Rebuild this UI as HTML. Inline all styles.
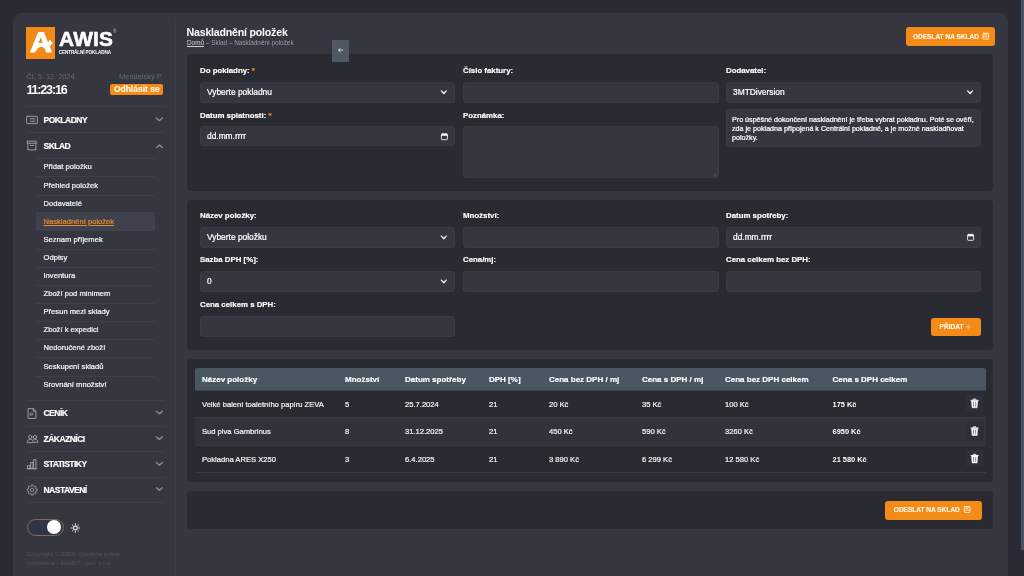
<!DOCTYPE html>
<html lang="cs">
<head>
<meta charset="utf-8">
<title>Naskladnění položek</title>
<style>
*{box-sizing:border-box;margin:0;padding:0}
html,body{width:1024px;height:576px;overflow:hidden}
body{background:#2a2a34;font-family:"Liberation Sans",sans-serif;color:#fff;position:relative;-webkit-font-smoothing:antialiased}
.abs,.t,.lbl,.inp,.card,.btn,.hr,.sub,.mi,.chev,.ico{position:absolute}
.t{white-space:nowrap;line-height:12px;height:12px}
#root{position:absolute;left:0;top:0;width:1024px;height:576px;will-change:transform}
#panel{position:absolute;left:13px;top:13px;width:995px;height:580px;background:#363640;border-radius:8px}
#sideline{position:absolute;left:169px;top:21px;width:7px;height:555px;background:#35353f;border-right:1px solid #3a3b45}
#scroll{position:absolute;left:1021px;top:0;width:3px;height:550px;background:#4b5462}
.card{background:#292a32;border-radius:4px}
.lbl{font-weight:bold;font-size:7.85px;line-height:12px;height:12px;white-space:nowrap;color:#fff}
.lbl i{color:#f08a1c;font-style:normal}
.inp{background:#35363f;border:1px solid #3a3b45;border-radius:3px;height:20px;font-size:8.4px;line-height:18px;padding:0 0 0 6px;color:#fff;white-space:nowrap}
.btn{background:#f28b17;border-radius:3px;color:#fff3e0;font-weight:bold;font-size:6.54px;white-space:nowrap;text-align:left}
.hr{height:1px;background:#3e3f49}
.mi{font-weight:bold;font-size:8.5px;letter-spacing:-0.52px;line-height:12px;height:12px;left:43.5px;color:#fff;white-space:nowrap}
.sub{font-size:7.62px;line-height:12px;height:12px;left:43.5px;color:#f4f4f6;white-space:nowrap}
.th{position:absolute;font-weight:bold;font-size:8px;line-height:12px;height:12px;top:373.8px;white-space:nowrap}
.td{position:absolute;font-size:7.6px;line-height:12px;height:12px;white-space:nowrap;color:#f2f2f4}
.td b{font-weight:bold;color:#fff;font-size:7.4px;-webkit-text-stroke:0}
.inp,.sub,.td{-webkit-text-stroke:0.22px currentColor}
.lbl,.th,.mi,.btn{-webkit-text-stroke:0.18px currentColor}
svg{position:absolute;overflow:visible}
</style>
</head>
<body>
<div id="root">
<div id="panel"></div>
<div id="sideline"></div>
<div id="scroll"></div>

<!-- SIDEBAR -->
<div id="sidebar">
  <div class="abs" style="left:26.4px;top:26.7px;width:28.9px;height:32px;background:#f18a16"></div>
  <div class="t" style="left:58.6px;top:26.4px;font-weight:bold;font-size:19.8px;line-height:26px;height:26px;letter-spacing:0.2px;-webkit-text-stroke:0.55px #fff;transform:scaleX(1.055);transform-origin:0 0">AWIS</div>
  <div class="t" style="left:113px;top:29.2px;font-size:4.6px;line-height:5px;height:5px;color:#c4c5cb">®</div>
  <div class="t" style="left:58.8px;top:49.6px;font-weight:bold;font-size:4.6px;line-height:6px;height:6px;letter-spacing:-0.1px">CENTRÁLNÍ POKLADNA</div>

  <div class="t" style="left:26.6px;top:70.5px;font-size:7.3px;color:#666975">Čt, 5. 12. 2024</div>
  <div class="t" style="left:100px;width:62.8px;text-align:right;top:70.5px;font-size:7.45px;color:#666975">Mendelský P.</div>
  <div class="t" style="left:26.4px;top:81.6px;font-weight:bold;font-size:12.5px;letter-spacing:-1.15px;line-height:16px;height:16px">11:23:16</div>
  <div class="btn" style="left:110.3px;top:84px;width:53px;height:11.4px;border-radius:2px;font-size:8.5px;line-height:11.4px;text-align:center">Odhlásit se</div>

  <div class="hr" style="left:26.5px;top:106px;width:138px"></div>
  <div class="mi" style="top:113.9px">POKLADNY</div>
  <div class="hr" style="left:26.5px;top:132px;width:138px"></div>
  <div class="mi" style="top:139.5px">SKLAD</div>
  <div class="hr" style="left:36px;top:157.5px;width:118.5px"></div>

  <div class="abs" style="left:36px;top:212px;width:119px;height:19px;background:#3f424d"></div>
  <div class="sub" style="top:161.4px">Přidat položku</div>
  <div class="hr" style="left:36px;top:176px;width:119px"></div>
  <div class="sub" style="top:179.5px">Přehled položek</div>
  <div class="hr" style="left:36px;top:195px;width:119px"></div>
  <div class="sub" style="top:197.6px">Dodavatelé</div>
  <div class="sub" style="top:215.7px;color:#e8882a;text-decoration:underline">Naskladnění položek</div>
  <div class="sub" style="top:233.8px">Seznam příjemek</div>
  <div class="hr" style="left:36px;top:249px;width:119px"></div>
  <div class="sub" style="top:251.9px">Odpisy</div>
  <div class="hr" style="left:36px;top:267px;width:119px"></div>
  <div class="sub" style="top:270.0px">Inventura</div>
  <div class="hr" style="left:36px;top:285px;width:119px"></div>
  <div class="sub" style="top:288.1px">Zboží pod minimem</div>
  <div class="hr" style="left:36px;top:303px;width:119px"></div>
  <div class="sub" style="top:306.2px">Přesun mezi sklady</div>
  <div class="hr" style="left:36px;top:321px;width:119px"></div>
  <div class="sub" style="top:324.3px">Zboží k expedici</div>
  <div class="hr" style="left:36px;top:339px;width:119px"></div>
  <div class="sub" style="top:342.4px">Nedoručené zboží</div>
  <div class="hr" style="left:36px;top:357px;width:119px"></div>
  <div class="sub" style="top:360.5px">Seskupení skladů</div>
  <div class="hr" style="left:36px;top:376px;width:119px"></div>
  <div class="sub" style="top:378.6px">Srovnání množství</div>

  <div class="hr" style="left:26.5px;top:400px;width:138px"></div>
  <div class="mi" style="top:406.9px">CENÍK</div>
  <div class="hr" style="left:26.5px;top:425.5px;width:138px"></div>
  <div class="mi" style="top:432.7px">ZÁKAZNÍCI</div>
  <div class="hr" style="left:26.5px;top:451px;width:138px"></div>
  <div class="mi" style="top:458.4px">STATISTIKY</div>
  <div class="hr" style="left:26.5px;top:476.5px;width:138px"></div>
  <div class="mi" style="top:484.2px">NASTAVENÍ</div>
  <div class="hr" style="left:26.5px;top:502px;width:138px"></div>

  <div class="abs" style="left:27px;top:519px;width:37px;height:17px;border:1px solid #86694f;border-radius:9px"></div>
  <div class="abs" style="left:30px;top:522px;width:26px;height:11px;border-radius:6px;background:#2f3548"></div>
  <div class="abs" style="left:47px;top:520.3px;width:14px;height:14px;border-radius:7px;background:#fff"></div>

  <div class="t" style="left:26.5px;top:548px;font-size:6.2px;color:#50535e">Copyright © 2024, Všechna práva</div>
  <div class="t" style="left:26.5px;top:556.8px;font-size:6.2px;color:#50535e">vyhrazena - EkoBIT, spol. s.r.o.</div>
</div>

<!-- HEADER -->
<div class="t" style="left:186.6px;top:23.7px;font-weight:bold;font-size:10.6px;letter-spacing:-0.2px;line-height:16px;height:16px">Naskladnění položek</div>
<div class="t" style="left:187px;top:36.8px;font-size:6.4px;color:#9c9da6"><u style="color:#cfd0d6">Domů</u> – Sklad – Naskladnění položek</div>
<div class="btn" style="left:905.5px;top:26.5px;width:89.3px;height:19.5px;line-height:19.5px;padding-left:7.4px">ODESLAT NA SKLAD</div>

<!-- CARD 1 -->
<div class="card" style="left:187px;top:54px;width:806px;height:137px"></div>
<div class="lbl" style="left:200px;top:64.5px">Do pokladny: <i>*</i></div>
<div class="inp" style="left:200px;top:82px;width:255px;height:20.5px">Vyberte pokladnu</div>
<div class="lbl" style="left:200px;top:109.5px">Datum splatnosti: <i>*</i></div>
<div class="inp" style="left:200px;top:126px;width:255px">dd.mm.rrrr</div>
<div class="lbl" style="left:463px;top:64.5px">Číslo faktury:</div>
<div class="inp" style="left:462.5px;top:82px;width:256px;height:20.5px"></div>
<div class="lbl" style="left:463px;top:109.5px">Poznámka:</div>
<div class="inp" style="left:462.5px;top:126px;width:256px;height:51.5px"></div>
<div class="lbl" style="left:726px;top:64.5px">Dodavatel:</div>
<div class="inp" style="left:726px;top:82px;width:255px;height:20.5px">3MTDiversion</div>
<div class="inp" style="left:726px;top:109px;width:255px;height:38px;font-size:7.15px;line-height:9.1px;padding:5.9px 0 0 5px;letter-spacing:0;white-space:normal">Pro úspěšné dokončení naskladnění je třeba vybrat pokladnu. Poté se ověří,<br>zda je pokladna připojená k Centrální pokladně, a je možné naskladňovat<br>položky.</div>

<div class="abs" style="left:332px;top:40px;width:17.4px;height:22.2px;background:#4f5966"></div>
<svg style="left:338.1px;top:48.3px" width="4.7" height="4.2" viewBox="0 0 5.6 5"><path d="M5.4 2.5H0.8M2.6 0.6L0.7 2.5L2.6 4.4" fill="none" stroke="#fff" stroke-width="0.9" stroke-linecap="round" stroke-linejoin="round"/></svg>

<!-- CARD 2 -->
<div class="card" style="left:187px;top:200px;width:806px;height:150px"></div>
<div class="lbl" style="left:200px;top:210px">Název položky:</div>
<div class="inp" style="left:200px;top:227.3px;width:255px;height:20.4px">Vyberte položku</div>
<div class="lbl" style="left:200px;top:254.2px">Sazba DPH [%]:</div>
<div class="inp" style="left:200px;top:271.2px;width:255px;height:20.6px">0</div>
<div class="lbl" style="left:200px;top:298.9px">Cena celkem s DPH:</div>
<div class="inp" style="left:200px;top:316px;width:255px;height:20.6px"></div>
<div class="lbl" style="left:463px;top:210px">Množství:</div>
<div class="inp" style="left:462.5px;top:227.3px;width:256px;height:20.4px"></div>
<div class="lbl" style="left:463px;top:254.2px">Cena/mj:</div>
<div class="inp" style="left:462.5px;top:271.2px;width:256px;height:20.6px"></div>
<div class="lbl" style="left:726px;top:210px">Datum spotřeby:</div>
<div class="inp" style="left:726px;top:227.3px;width:255px;height:20.4px">dd.mm.rrrr</div>
<div class="lbl" style="left:726px;top:254.2px">Cena celkem bez DPH:</div>
<div class="inp" style="left:726px;top:271.2px;width:255px;height:20.6px"></div>
<div class="btn" style="left:931px;top:317.5px;width:50.3px;height:18.8px;line-height:18.8px;padding-left:8.6px">PŘIDAT</div>

<!-- CARD 3 -->
<div class="card" style="left:187px;top:359px;width:806px;height:123px"></div>
<div class="abs" style="left:195px;top:368px;width:791px;height:22px;background:#4a5662;border-radius:2px 2px 0 0"></div>
<div class="abs" style="left:195px;top:390px;width:791px;height:1px;background:#3a404b"></div>
<div class="abs" style="left:195px;top:418px;width:791px;height:27px;background:#31323b"></div>
<div class="hr" style="left:195px;top:417px;width:791px;background:#393a44"></div>
<div class="hr" style="left:195px;top:445px;width:791px;background:#393a44"></div>
<div class="hr" style="left:195px;top:472px;width:791px;background:#393a44"></div>

<div class="th" style="left:202px">Název položky</div>
<div class="th" style="left:345px">Množství</div>
<div class="th" style="left:405px">Datum spotřeby</div>
<div class="th" style="left:489px">DPH [%]</div>
<div class="th" style="left:549px">Cena bez DPH / mj</div>
<div class="th" style="left:642px">Cena s DPH / mj</div>
<div class="th" style="left:725px">Cena bez DPH celkem</div>
<div class="th" style="left:832.6px">Cena s DPH celkem</div>

<div class="td" style="left:202px;top:398.5px">Velké balení toaletního papíru ZEVA</div>
<div class="td" style="left:345px;top:398.5px">5</div>
<div class="td" style="left:405px;top:398.5px">25.7.2024</div>
<div class="td" style="left:489px;top:398.5px">21</div>
<div class="td" style="left:549px;top:398.5px">20 Kč</div>
<div class="td" style="left:642px;top:398.5px">35 Kč</div>
<div class="td" style="left:725px;top:398.5px">100 Kč</div>
<div class="td" style="left:832.6px;top:398.5px"><b>175 Kč</b></div>

<div class="td" style="left:202px;top:426px">Sud piva Gambrinus</div>
<div class="td" style="left:345px;top:426px">8</div>
<div class="td" style="left:405px;top:426px">31.12.2025</div>
<div class="td" style="left:489px;top:426px">21</div>
<div class="td" style="left:549px;top:426px">450 Kč</div>
<div class="td" style="left:642px;top:426px">590 Kč</div>
<div class="td" style="left:725px;top:426px">3260 Kč</div>
<div class="td" style="left:832.6px;top:426px"><b>6950 Kč</b></div>

<div class="td" style="left:202px;top:453.5px">Pokladna ARES X250</div>
<div class="td" style="left:345px;top:453.5px">3</div>
<div class="td" style="left:405px;top:453.5px">6.4.2025</div>
<div class="td" style="left:489px;top:453.5px">21</div>
<div class="td" style="left:549px;top:453.5px">3 890 Kč</div>
<div class="td" style="left:642px;top:453.5px">6 299 Kč</div>
<div class="td" style="left:725px;top:453.5px">12 580 Kč</div>
<div class="td" style="left:832.6px;top:453.5px"><b>21 580 Kč</b></div>

<!-- CARD 4 -->
<div class="card" style="left:187px;top:491px;width:806px;height:38px"></div>
<div class="btn" style="left:884.5px;top:500.8px;width:97px;height:18.8px;line-height:18.8px;padding-left:9.3px">ODESLAT NA SKLAD</div>

<svg id="icons" style="left:0;top:0;pointer-events:none" width="1024" height="576" viewBox="0 0 1024 576">
<path d="M38.2 32H44L52 52.6H46.2L44.6 48.6C43.6 46.4 38.9 46.4 37.6 48.8L35 52.6H29.8Z M40.9 37.2L38.6 42.9H42.8Z" fill="#fff" fill-rule="evenodd"/><path d="M45.5 41.7H48.9V40.2H50.9V41.7H52.4V44.3H50.9V45.8H48.9V44.3H46.5Z" fill="#fff"/>
<g fill="none" stroke="#a2a5b0" stroke-width="0.9" stroke-linejoin="round" stroke-linecap="round">
<rect x="26.7" y="116.3" width="10.7" height="7.3" rx="0.6"/><path d="M30.6 118.5h4.2M30.6 120h4.2M30.6 121.5h4.2" stroke-width="0.65"/>
<rect x="27.2" y="141.2" width="9.4" height="2.1" rx="0.4"/><path d="M27.9 143.3V149.9h8V143.3"/><path d="M30.4 145.4h3.2"/>
<path d="M28.5 408.6h4.8l2.6 2.6v7.2h-7.4z"/><path d="M33.3 408.6v2.6h2.6"/><path d="M30.4 413.2h2.2v2h-2.2zM30.4 414.2h2.2" stroke-width="0.55"/>
<circle cx="30.3" cy="437" r="1.65"/><circle cx="35" cy="437" r="1.65"/><path d="M27.3 442.3c0-2 1.3-3 3-3s3 1 3 3z"/><path d="M33.6 439.6c0.4-0.2 0.9-0.3 1.4-0.3 1.7 0 3 1 3 3h-3.6"/>
<path d="M27.2 468.7h9.6" /><rect x="28" y="465.6" width="2" height="3.1"/><rect x="31" y="462.6" width="2" height="6.1"/><rect x="34" y="459.6" width="2" height="9.1"/>
</g>
<path d="M37.19 489.20L37.19 490.80L36.04 490.93L35.56 492.09L36.28 493.00L35.15 494.13L34.24 493.41L33.08 493.89L32.95 495.04L31.35 495.04L31.22 493.89L30.06 493.41L29.15 494.13L28.02 493.00L28.74 492.09L28.26 490.93L27.11 490.80L27.11 489.20L28.26 489.07L28.74 487.91L28.02 487.00L29.15 485.87L30.06 486.59L31.22 486.11L31.35 484.96L32.95 484.96L33.08 486.11L34.24 486.59L35.15 485.87L36.28 487.00L35.56 487.91L36.04 489.07Z" fill="none" stroke="#a2a5b0" stroke-width="0.8" stroke-linejoin="round"/><circle cx="32.15" cy="490.0" r="1.7" fill="none" stroke="#a2a5b0" stroke-width="0.8"/>
<path d="M156.30 117.95L159.30 120.65L162.30 117.95" fill="none" stroke="#8b8e99" stroke-width="1.35" stroke-linecap="round" stroke-linejoin="round"/>
<path d="M156.50 147.65L159.50 144.95L162.50 147.65" fill="none" stroke="#8b8e99" stroke-width="1.35" stroke-linecap="round" stroke-linejoin="round"/>
<path d="M156.40 411.15L159.40 413.85L162.40 411.15" fill="none" stroke="#8b8e99" stroke-width="1.35" stroke-linecap="round" stroke-linejoin="round"/>
<path d="M156.40 436.85L159.40 439.55L162.40 436.85" fill="none" stroke="#8b8e99" stroke-width="1.35" stroke-linecap="round" stroke-linejoin="round"/>
<path d="M156.40 462.45L159.40 465.15L162.40 462.45" fill="none" stroke="#8b8e99" stroke-width="1.35" stroke-linecap="round" stroke-linejoin="round"/>
<path d="M156.40 487.65L159.40 490.35L162.40 487.65" fill="none" stroke="#8b8e99" stroke-width="1.35" stroke-linecap="round" stroke-linejoin="round"/>
<circle cx="75.4" cy="528.0" r="1.9" fill="none" stroke="#e9e9ec" stroke-width="1.1"/><path d="M78.50 528.00L79.80 528.00M77.59 530.19L78.51 531.11M75.40 531.10L75.40 532.40M73.21 530.19L72.29 531.11M72.30 528.00L71.00 528.00M73.21 525.81L72.29 524.89M75.40 524.90L75.40 523.60M77.59 525.81L78.51 524.89" stroke="#e9e9ec" stroke-width="0.95" stroke-linecap="round" fill="none"/>
<path d="M441.35 90.90L443.80 93.50L446.25 90.90" fill="none" stroke="#f4f4f6" stroke-width="1.35" stroke-linecap="round" stroke-linejoin="round"/>
<path d="M967.65 90.90L970.10 93.50L972.55 90.90" fill="none" stroke="#f4f4f6" stroke-width="1.35" stroke-linecap="round" stroke-linejoin="round"/>
<path d="M441.35 236.10L443.80 238.70L446.25 236.10" fill="none" stroke="#f4f4f6" stroke-width="1.35" stroke-linecap="round" stroke-linejoin="round"/>
<path d="M441.35 280.10L443.80 282.70L446.25 280.10" fill="none" stroke="#f4f4f6" stroke-width="1.35" stroke-linecap="round" stroke-linejoin="round"/>
<rect x="441.40" y="133.90" width="6" height="5.8" rx="0.8" fill="none" stroke="#f4f4f6" stroke-width="0.9"/><rect x="441.40" y="133.90" width="6" height="1.9" fill="#f4f4f6"/><path d="M442.90 133.00v1.4M445.90 133.00v1.4" stroke="#f4f4f6" stroke-width="0.8"/>
<rect x="967.60" y="234.50" width="6" height="5.8" rx="0.8" fill="none" stroke="#f4f4f6" stroke-width="0.9"/><rect x="967.60" y="234.50" width="6" height="1.9" fill="#f4f4f6"/><path d="M969.10 233.60v1.4M972.10 233.60v1.4" stroke="#f4f4f6" stroke-width="0.8"/>
<rect x="965.50" y="394.90" width="18.2" height="16.8" rx="1.5" fill="#2d2e37"/><path d="M970.90 400.30h7.4M973.30 400.20v-1.1h2.6v1.1" fill="none" stroke="#fff" stroke-width="0.9" stroke-linecap="round"/><path d="M971.50 400.90l0.6 6.9h5l0.6 -6.9z" fill="#fff" stroke="#fff" stroke-width="0.5" stroke-linejoin="round"/><path d="M973.50 401.90v4.8M975.70 401.90v4.8" stroke="#2d2e37" stroke-width="0.6"/>
<rect x="965.50" y="422.60" width="18.2" height="16.8" rx="1.5" fill="#2d2e37"/><path d="M970.90 428.00h7.4M973.30 427.90v-1.1h2.6v1.1" fill="none" stroke="#fff" stroke-width="0.9" stroke-linecap="round"/><path d="M971.50 428.60l0.6 6.9h5l0.6 -6.9z" fill="#fff" stroke="#fff" stroke-width="0.5" stroke-linejoin="round"/><path d="M973.50 429.60v4.8M975.70 429.60v4.8" stroke="#2d2e37" stroke-width="0.6"/>
<rect x="965.50" y="450.10" width="18.2" height="16.8" rx="1.5" fill="#2d2e37"/><path d="M970.90 455.50h7.4M973.30 455.40v-1.1h2.6v1.1" fill="none" stroke="#fff" stroke-width="0.9" stroke-linecap="round"/><path d="M971.50 456.10l0.6 6.9h5l0.6 -6.9z" fill="#fff" stroke="#fff" stroke-width="0.5" stroke-linejoin="round"/><path d="M973.50 457.10v4.8M975.70 457.10v4.8" stroke="#2d2e37" stroke-width="0.6"/>
<g fill="none" stroke="#ffeacb" stroke-width="0.95" stroke-linejoin="round" stroke-linecap="round"><rect x="982.95" y="33.25" width="5.7" height="5.9" rx="0.5"/><path d="M982.95 36.80h5.7"/><path d="M984.80 33.30v1.7h2v-1.7"/></g>
<g fill="none" stroke="#ffeacb" stroke-width="0.95" stroke-linejoin="round" stroke-linecap="round"><rect x="964.25" y="506.55" width="5.7" height="5.9" rx="0.5"/><path d="M964.25 510.10h5.7"/><path d="M966.10 506.60v1.7h2v-1.7"/></g>
<path d="M716.6 173.2l-3.2 3.2M716.6 175.2l-1.4 1.4" stroke="#6a6c76" stroke-width="0.6" fill="none"/>
<path d="M965.6 326.8h5.2M968.2 324.2v5.2" stroke="#f9dcb2" stroke-width="0.6" fill="none"/>
</svg>
</div>
</body>
</html>
